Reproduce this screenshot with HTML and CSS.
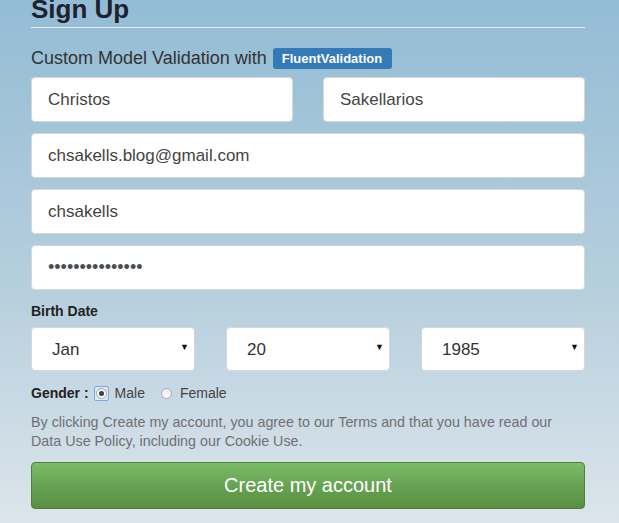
FILE: index.html
```html
<!DOCTYPE html>
<html>
<head>
<meta charset="utf-8">
<link rel="stylesheet" href="styles.css">
</head>
<body>
<div class="page">
  <h2 class="title">Sign Up</h2>
  <div class="rule"></div>
  <p class="subtitle">Custom Model Validation with <span class="badge">FluentValidation</span></p>
  <form class="form">
    <div class="row two">
      <input class="field" type="text" value="Christos">
      <input class="field" type="text" value="Sakellarios">
    </div>
    <input class="field" type="text" value="chsakells.blog@gmail.com">
    <input class="field" type="text" value="chsakells">
    <input class="field pw" type="password" value="passwordpasswor">
    <label class="label">Birth Date</label>
    <div class="row three">
      <div class="sel"><select><option>Jan</option></select><span class="arrow">▼</span></div>
      <div class="sel"><select><option>20</option></select><span class="arrow">▼</span></div>
      <div class="sel"><select><option>1985</option></select><span class="arrow">▼</span></div>
    </div>
    <div class="gender">
      <span class="glabel">Gender :</span>
      <span class="radio focus"><span class="circle checked"></span></span>
      <span class="opt">Male</span>
      <span class="radio"><span class="circle"></span></span>
      <span class="opt">Female</span>
    </div>
    <p class="terms">By clicking Create my account, you agree to our Terms and that you have read our Data Use Policy, including our Cookie Use.</p>
    <button class="btn" type="button">Create my account</button>
  </form>
</div>
</body>
</html>
```
FILE: styles.css
```css
html, body {
  margin: 0;
  padding: 0;
  height: 523px;
  overflow: hidden;
}
body {
  background: linear-gradient(to bottom, #93bcd5 0%, #b6cfdd 55%, #dce5eb 100%);
  font-family: "Liberation Sans", Arial, sans-serif;
  color: #333;
}
.page {
  width: 554px;
  padding-left: 31px;
}
.title {
  margin: -6px 0 0 0;
  font-size: 26px;
  line-height: 30px;
  font-weight: bold;
  color: #1c2230;
}
.rule {
  height: 1px;
  background: #e8f0f5;
  margin-top: 3px;
}
.subtitle {
  margin: 19px 0 0 0;
  font-size: 18px;
  line-height: 22px;
  color: #333;
  display: flex;
  align-items: center;
}
.badge {
  display: inline-block;
  margin-left: 6px;
  background: #337ab7;
  color: #fff;
  font-weight: bold;
  font-size: 13px;
  line-height: 21px;
  padding: 0 10px 0 9px;
  border-radius: 3px;
}
.form {
  display: flex;
  flex-direction: column;
  margin-top: 8px;
}
.row {
  display: flex;
  justify-content: space-between;
}
.field {
  box-sizing: border-box;
  height: 45px;
  width: 100%;
  margin: 0 0 11px 0;
  border: 1px solid #d4d8db;
  border-radius: 4px;
  background: #fff;
  padding: 0 16px;
  font-family: "Liberation Sans", Arial, sans-serif;
  font-size: 17px;
  color: #444;
  outline: none;
}
.two .field {
  width: 262px;
}
.pw {
  font-size: 18px;
  color: #4a4f55;
  margin-bottom: 0;
}
.label {
  margin-top: 14px;
  font-size: 14px;
  font-weight: bold;
  color: #222;
  line-height: 15px;
}
.three {
  margin-top: 8px;
}
.sel {
  position: relative;
  width: 164px;
  height: 44px;
}
.sel select {
  box-sizing: border-box;
  width: 100%;
  height: 100%;
  -webkit-appearance: none;
  appearance: none;
  border: 1px solid #d4d8db;
  border-radius: 4px;
  background: #fff;
  padding: 0 0 0 20px;
  font-family: "Liberation Sans", Arial, sans-serif;
  font-size: 17px;
  color: #333;
  outline: none;
}
.arrow {
  position: absolute;
  right: 6px;
  top: 15px;
  font-size: 9px;
  color: #111;
  pointer-events: none;
}
.gender {
  display: flex;
  align-items: center;
  margin-top: 14px;
  height: 16px;
  font-size: 14px;
  color: #444;
}
.glabel {
  font-weight: bold;
  font-size: 14px;
  color: #222;
  margin-right: 5px;
}
.radio {
  box-sizing: border-box;
  width: 15px;
  height: 15px;
  display: flex;
  align-items: center;
  justify-content: center;
  margin-right: 6px;
}
.radio.focus {
  border: 1px solid #7fa9d9;
  border-radius: 2px;
  background: #dbe8f5;
}
.circle {
  box-sizing: border-box;
  width: 11px;
  height: 11px;
  border-radius: 50%;
  border: 1px solid #a8adb3;
  background: linear-gradient(#e8eaec, #fdfdfd);
  position: relative;
}
.circle.checked::after {
  content: "";
  position: absolute;
  left: 2px;
  top: 2px;
  width: 5px;
  height: 5px;
  border-radius: 50%;
  background: #3a3f45;
}
.opt {
  margin-right: 14px;
}
.terms {
  margin: 12px 0 0 0;
  font-size: 14.3px;
  line-height: 19px;
  color: #707070;
  max-width: 530px;
}
.btn {
  margin-top: 11px;
  height: 47px;
  width: 100%;
  border: 1px solid #4f7f3c;
  border-radius: 4px;
  background: linear-gradient(to bottom, #7bbd67 0%, #66a052 55%, #58903f 100%);
  color: #fff;
  font-family: "Liberation Sans", Arial, sans-serif;
  font-size: 20px;
}
```
